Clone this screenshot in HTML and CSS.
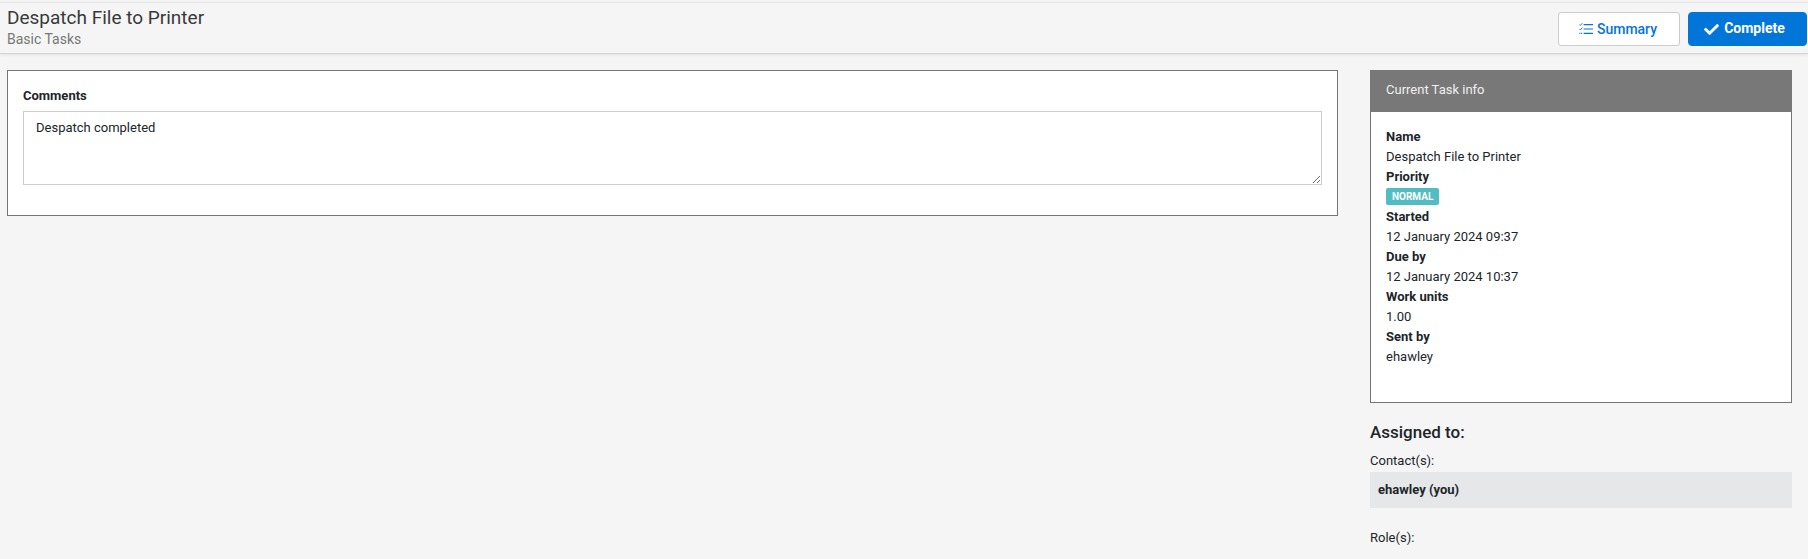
FILE: index.html
```html
<!DOCTYPE html>
<html lang="en">
<head>
<meta charset="utf-8">
<title>Despatch File to Printer</title>
<link rel="stylesheet" href="styles.css">
</head>
<body>
<header class="topbar">
  <div class="titles">
    <h1 class="title">Despatch File to Printer</h1>
    <div class="subtitle">Basic Tasks</div>
  </div>
  <div class="actions">
    <button class="btn btn-summary" type="button">
      <svg class="icon-list" viewBox="0 0 14 12" aria-hidden="true">
        <path d="M4.6 1.6H14M4.6 6H14M4.6 10.4H14" stroke="currentColor" stroke-width="1.2" fill="none"/>
        <path d="M0.3 1.5l1 1L3.3 0.2M0.3 5.9l1 1L3.3 4.6" stroke="currentColor" stroke-width="0.9" fill="none"/>
        <path d="M0.4 10.4h2.8" stroke="currentColor" stroke-width="1.4" stroke-dasharray="1 0.7" fill="none"/>
      </svg>
      Summary
    </button>
    <button class="btn btn-complete" type="button">
      <svg class="icon-check" viewBox="0 0 512 512" aria-hidden="true">
        <path fill="currentColor" d="M173.898 439.404l-166.4-166.4c-9.997-9.997-9.997-26.206 0-36.204l36.203-36.204c9.997-9.998 26.207-9.998 36.204 0L192 312.69 432.095 72.596c9.997-9.997 26.207-9.997 36.204 0l36.203 36.204c9.997 9.997 9.997 26.206 0 36.204l-294.4 294.401c-9.998 9.997-26.207 9.997-36.204-.001z"/>
      </svg>
      Complete
    </button>
  </div>
</header>
<main class="content">
  <section class="panel-comments">
    <label class="field-label" for="comments">Comments</label>
    <textarea class="comments" id="comments">Despatch completed</textarea>
  </section>
  <aside class="side">
    <section class="info">
      <div class="info-head">Current Task info</div>
      <dl class="info-body">
        <dt>Name</dt><dd>Despatch File to Printer</dd>
        <dt>Priority</dt><dd><span class="badge">NORMAL</span></dd>
        <dt>Started</dt><dd>12 January 2024 09:37</dd>
        <dt>Due by</dt><dd>12 January 2024 10:37</dd>
        <dt>Work units</dt><dd>1.00</dd>
        <dt>Sent by</dt><dd>ehawley</dd>
      </dl>
    </section>
    <h2 class="assigned">Assigned to:</h2>
    <div class="assign-label">Contact(s):</div>
    <div class="contact">ehawley (you)</div>
    <div class="assign-label role-label">Role(s):</div>
  </aside>
</main>
</body>
</html>
```
FILE: styles.css
```css
* { box-sizing: border-box; }
html, body { margin: 0; height: 100%; }
body {
  background: #f5f5f5;
  color: #212529;
  font-family: Roboto, "Liberation Sans", sans-serif;
  font-size: 13px;
  line-height: 20px;
  overflow: hidden;
}
.topbar {
  display: flex;
  justify-content: space-between;
  align-items: flex-start;
  height: 52px;
  margin-top: 2px;
  padding: 0 1px 0 7px;
  background: #f5f5f5;
  border-top: 1px solid #e6e6e6;
  border-bottom: 1px solid #d4d4d4;
  box-shadow: 0 1px 3px rgba(0,0,0,.08);
}
.title {
  margin: 2px 0 0;
  font-size: 19px;
  font-weight: 400;
  line-height: 25px;
  color: #3a3a3a;
}
.subtitle {
  font-size: 14px;
  line-height: 19px;
  color: #777;
}
.actions { display: flex; gap: 8px; margin-top: 9px; }
.btn {
  display: flex;
  align-items: center;
  justify-content: center;
  height: 34px;
  border-radius: 3px;
  font-family: inherit;
  font-size: 14px;
  font-weight: 500;
  padding: 0;
}
.btn-summary {
  width: 122px;
  gap: 4px;
  background: #fff;
  border: 1px solid #ccc;
  color: #0275d8;
  padding-right: 2px;
}
.btn-complete {
  width: 119px;
  gap: 5px;
  background: #0275d8;
  border: 1px solid #0275d8;
  border-radius: 4px;
  color: #fff;
  font-weight: 700;
  font-size: 14px;
  padding: 0 6px 2px 0;
}
.icon-list { width: 14px; height: 12px; }
.icon-check { width: 15px; height: 15px; margin-top: 2px; }
.content {
  display: flex;
  align-items: flex-start;
  gap: 32px;
  padding: 16px 16px 0 7px;
}
.panel-comments {
  flex: 0 0 1331px;
  height: 146px;
  background: #fff;
  border: 1px solid #757575;
  padding: 15px 15px 0;
}
.field-label {
  display: block;
  font-weight: 700;
  font-size: 13px;
  line-height: 20px;
  margin-bottom: 5px;
}
.comments {
  display: block;
  width: 100%;
  height: 74px;
  padding: 6px 12px;
  border: 1px solid #ccc;
  background: #fff;
  color: #212529;
  font-family: inherit;
  font-size: 13px;
  line-height: 20px;
  outline: none;
}
.side { flex: 0 0 422px; }
.info {
  height: 333px;
  background: #fff;
  border: 1px solid #757575;
}
.info-head {
  height: 42px;
  margin: -1px -1px 0;
  background: #787878;
  color: #f0f0f0;
  padding: 10px 16px 0;
  line-height: 20px;
}
.info-body { margin: 0; padding: 15px 15px 0; }
.info-body dt { font-weight: 700; height: 20px; }
.info-body dd { margin: 0; height: 20px; }
.badge {
  display: inline-block;
  height: 17px;
  padding: 0 6px;
  background: #51bcc1;
  color: #fff;
  border-radius: 2px;
  font-size: 10px;
  font-weight: 700;
  line-height: 17px;
  vertical-align: top;
  margin-top: 1px;
}
.assigned {
  margin: 18px 0 0;
  font-size: 17px;
  font-weight: 500;
  line-height: 22px;
}
.assign-label { margin-top: 8px; line-height: 20px; }
.contact {
  height: 36px;
  margin-top: 1px;
  padding: 8px;
  background: #e6e7e9;
  font-weight: 700;
  line-height: 20px;
}
.role-label { margin-top: 20px; }
```
